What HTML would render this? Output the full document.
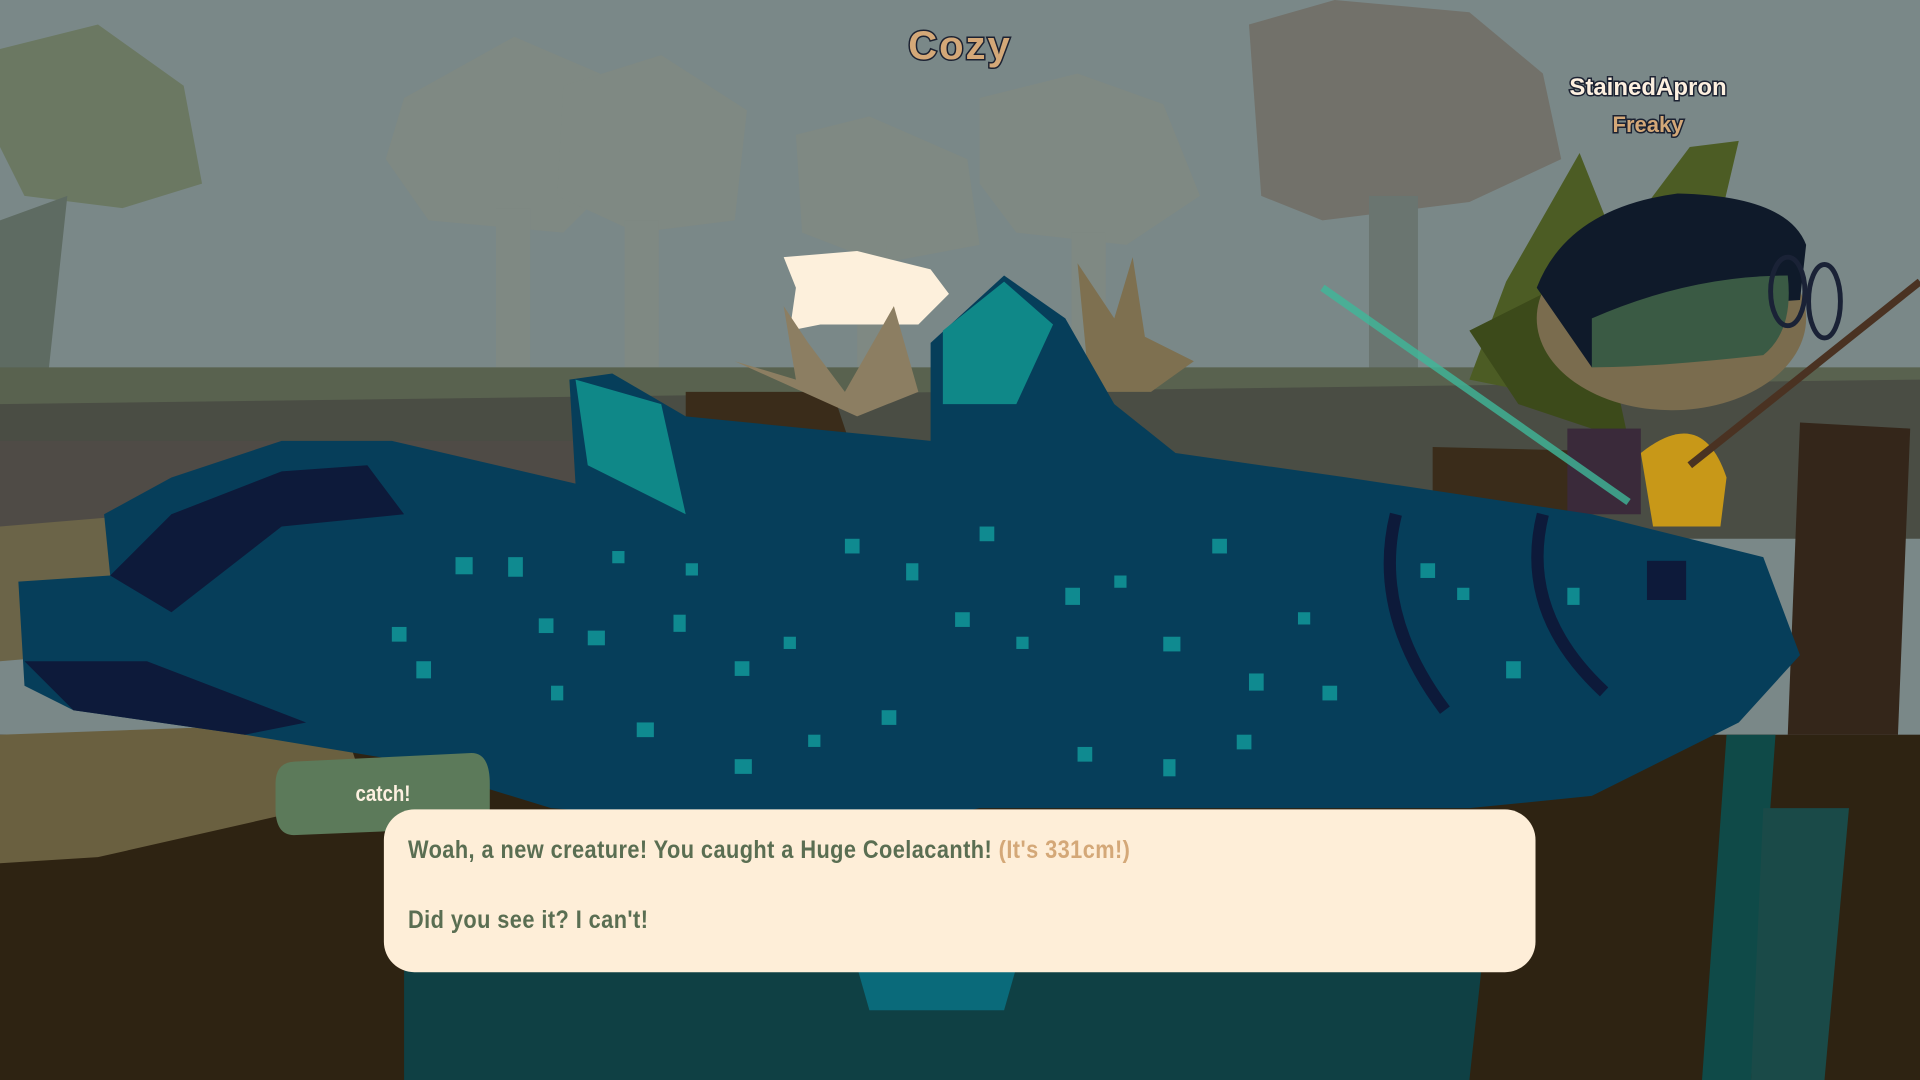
<!DOCTYPE html>
<html><head><meta charset="utf-8"><style>
html,body{margin:0;padding:0;width:1920px;height:1080px;overflow:hidden;background:#7a8888}
svg{position:absolute;left:0;top:0}
.t{position:absolute;font-family:"Liberation Sans",sans-serif;font-weight:bold;white-space:nowrap;transform-origin:0 50%}
.lbl{position:absolute;font-family:"Liberation Sans",sans-serif;font-weight:bold;white-space:nowrap;text-align:center;transform:translateX(-50%)}
</style></head><body>
<svg width="1920" height="1080" viewBox="0 0 1568 882" preserveAspectRatio="none">
<rect width="1568" height="882" fill="#7a8888"/>
<g fill="#7f8983">
<polygon points="330,80 420,30 490,60 500,150 460,190 350,180 315,130"/>
<polygon points="460,70 540,45 610,90 600,180 520,190 455,160"/>
<polygon points="650,110 710,95 790,130 800,200 720,215 655,190"/>
<polygon points="800,80 880,60 950,85 980,160 920,200 830,190 800,150"/>
<rect x="405" y="170" width="28" height="130"/><rect x="510" y="180" width="28" height="120"/>
<rect x="875" y="190" width="28" height="110"/><rect x="700" y="200" width="24" height="100"/>
</g>
<polygon points="0,40 80,20 150,70 165,150 100,170 20,160 0,120" fill="#6b7862"/>
<polygon points="0,180 55,160 40,300 0,310" fill="#5e6b62"/>
<polygon points="1020,20 1090,0 1200,10 1260,60 1275,130 1200,165 1080,180 1030,160" fill="#72716a"/>
<rect x="1118" y="160" width="40" height="150" fill="#6a7570"/>
<rect x="0" y="300" width="1568" height="130" fill="#59624f"/>
<polygon points="0,330 1568,310 1568,440 0,440" fill="#4a4d44"/>
<rect x="0" y="360" width="500" height="90" fill="#4f4b46"/>
<polygon points="0,430 120,420 120,530 0,540" fill="#6b6448"/>
<rect x="0" y="600" width="1568" height="282" fill="#2e2312"/>
<polygon points="330,790 1210,790 1200,882 330,882" fill="#0f4044"/>
<polygon points="1410,600 1450,600 1430,882 1390,882" fill="#0f4a48"/>
<polygon points="1440,660 1510,660 1490,882 1430,882" fill="#1a4a48"/>
<polygon points="0,600 280,590 300,650 80,700 0,705" fill="#6a6040"/>
<polygon points="1470,345 1560,350 1550,600 1460,600" fill="#34261a"/>
<polygon points="1170,365 1290,368 1280,420 1170,420" fill="#3a2c1a"/>
<polygon points="560,320 680,320 700,380 560,380" fill="#3a2c1a"/>
<polygon points="1290,125 1320,200 1380,120 1420,115 1400,200 1300,330 1200,310 1230,230" fill="#4c5c24"/>
<polygon points="1200,270 1300,220 1330,360 1240,330" fill="#3c4a1a"/>
<ellipse cx="1365" cy="260" rx="110" ry="75" fill="#7a6c4e"/>
<path d="M1255,235 Q1280,170 1370,158 Q1460,160 1475,200 L1470,245 Q1380,250 1300,300 Z" fill="#0f1a2a"/>
<path d="M1300,260 Q1380,225 1460,225 Q1465,270 1440,290 Q1350,300 1300,300 Z" fill="#3a5a44"/>
<ellipse cx="1460" cy="238" rx="14" ry="28" fill="none" stroke="#1a2236" stroke-width="4"/>
<ellipse cx="1490" cy="246" rx="13" ry="30" fill="none" stroke="#1a2236" stroke-width="4"/>
<path d="M1340,370 Q1390,330 1410,390 L1405,430 L1350,430 Z" fill="#c89818"/>
<rect x="1280" y="350" width="60" height="70" fill="#3a2a3a"/>
<line x1="1380" y1="380" x2="1568" y2="230" stroke="#4a3222" stroke-width="6"/>
<line x1="1080" y1="235" x2="1330" y2="410" stroke="#3fb89a" stroke-width="6" opacity="0.8"/>
<polygon points="640,210 700,205 760,220 775,240 750,265 670,265 645,270 650,235" fill="#fdf0dc"/>
<path d="M600,295 L650,310 L640,250 L660,280 L690,320 L730,250 L750,320 L700,340 Z" fill="#8c7e62"/>
<path d="M880,215 L910,260 L925,210 L935,275 L975,295 L940,320 L890,320 Z" fill="#7e7050"/>
<path d="M15,475 L90,470 L85,420 L140,390 L230,360 L320,360 L470,395 L465,310 L500,305 L560,340 L760,360 L760,280 L820,225 L870,260 L910,330 L960,370 L1100,390 L1300,420 L1440,455 L1470,535 L1420,590 L1300,650 L1200,660 L800,660 L700,680 L450,660 L320,620 L200,600 L60,580 L20,560 Z" fill="#063e5a"/>
<path d="M90,470 L140,420 L230,385 L300,380 L330,420 L230,430 L140,500 Z" fill="#0d1a3a"/>
<path d="M20,540 L120,540 L250,590 L200,600 L60,580 Z" fill="#0d1a3a"/>
<path d="M470,310 L540,330 L560,420 L480,380 Z" fill="#0f8888"/>
<path d="M770,270 L820,230 L860,265 L830,330 L770,330 Z" fill="#0f8888"/>
<path d="M1140,420 Q1120,500 1180,580" fill="none" stroke="#0d1a3a" stroke-width="10"/>
<path d="M1260,420 Q1240,500 1310,565" fill="none" stroke="#0d1a3a" stroke-width="10"/>
<rect x="1345" y="458" width="32" height="32" fill="#0d1a3a"/>
<path d="M700,790 L830,790 L820,825 L710,825 Z" fill="#0a6a7a"/>
<g fill="#0f8a90">
<rect x="320" y="512" width="12" height="12"/><rect x="372" y="455" width="14" height="14"/><rect x="415" y="455" width="12" height="16"/><rect x="440" y="505" width="12" height="12"/><rect x="480" y="515" width="14" height="12"/><rect x="500" y="450" width="10" height="10"/><rect x="550" y="502" width="10" height="14"/><rect x="600" y="540" width="12" height="12"/><rect x="520" y="590" width="14" height="12"/><rect x="640" y="520" width="10" height="10"/><rect x="690" y="440" width="12" height="12"/><rect x="740" y="460" width="10" height="14"/><rect x="780" y="500" width="12" height="12"/><rect x="830" y="520" width="10" height="10"/><rect x="870" y="480" width="12" height="14"/><rect x="910" y="470" width="10" height="10"/><rect x="950" y="520" width="14" height="12"/><rect x="990" y="440" width="12" height="12"/><rect x="1020" y="550" width="12" height="14"/><rect x="1060" y="500" width="10" height="10"/><rect x="1080" y="560" width="12" height="12"/><rect x="1160" y="460" width="12" height="12"/><rect x="1190" y="480" width="10" height="10"/><rect x="1230" y="540" width="12" height="14"/><rect x="1280" y="480" width="10" height="14"/><rect x="600" y="620" width="14" height="12"/><rect x="660" y="600" width="10" height="10"/><rect x="720" y="580" width="12" height="12"/><rect x="880" y="610" width="12" height="12"/><rect x="950" y="620" width="10" height="14"/><rect x="340" y="540" width="12" height="14"/><rect x="450" y="560" width="10" height="12"/><rect x="1010" y="600" width="12" height="12"/><rect x="560" y="460" width="10" height="10"/><rect x="800" y="430" width="12" height="12"/>
</g>
<path d="M240,622 L385,615 Q400,615 400,640 L400,660 Q400,676 385,676 L240,682 Q225,682 225,660 L225,640 Q225,623 240,622 Z" fill="#5c7a5a"/>
<rect x="313.5" y="661" width="940.5" height="133" rx="25" fill="#feeed8"/>
</svg>
<div class="lbl" style="left:960px;top:24px;font-size:40px;letter-spacing:2px;color:#d4a878;-webkit-text-stroke:3px #1c2232;paint-order:stroke fill">Cozy</div>
<div class="lbl" style="left:1648px;top:74px;font-size:24px;color:#fdf0e0;-webkit-text-stroke:3px #1c2232;paint-order:stroke fill">StainedApron</div>
<div class="lbl" style="left:1648px;top:112px;font-size:22px;color:#d4a878;-webkit-text-stroke:3px #1c2232;paint-order:stroke fill">Freaky</div>
<div class="lbl" style="left:383px;top:781px;font-size:22px;color:#fdf0e0;transform:translateX(-50%) scaleX(0.85)">catch!</div>
<div class="t" style="left:408px;top:836px;font-size:25px;letter-spacing:0.5px;color:#5a6e52;transform:scaleX(0.87)">Woah, a new creature! You caught a Huge Coelacanth! <span style="color:#d4a878">(It's 331cm!)</span></div>
<div class="t" style="left:408px;top:906px;font-size:25px;letter-spacing:0.5px;color:#5a6e52;transform:scaleX(0.87)">Did you see it? I can't!</div>
</body></html>
